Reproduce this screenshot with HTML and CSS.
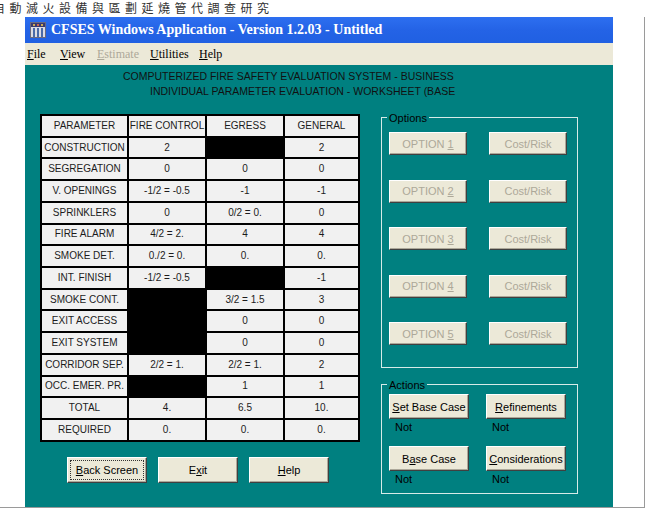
FILE: index.html
```html
<!DOCTYPE html>
<html>
<head>
<meta charset="utf-8">
<title>CFSES Windows Application</title>
<link rel="stylesheet" href="styles.css">
</head>
<body>
<div class="caption">自動滅火設備與區劃延燒管代調查研究</div>
<div class="screen">
  <div class="window">
    <div class="titlebar">
      <svg class="appicon" width="16" height="16" viewBox="0 0 16 16">
        <rect x="0.5" y="0.5" width="15" height="15" fill="#dcdce4" stroke="#6a6a80"/>
        <rect x="1" y="1" width="14" height="4" fill="#3a3a70"/>
        <circle cx="4" cy="3" r="1" fill="#ffd24a"/>
        <circle cx="8" cy="3" r="1" fill="#ff7a4a"/>
        <circle cx="12" cy="3" r="1" fill="#ffd24a"/>
        <rect x="3" y="6" width="2" height="9" fill="#4a6aa8"/>
        <rect x="7" y="6" width="2" height="9" fill="#4a6aa8"/>
        <rect x="11" y="6" width="2" height="9" fill="#4a6aa8"/>
      </svg>
      <span class="title">CFSES Windows Application - Version 1.2.03 - Untitled</span>
    </div>
    <div class="menubar">
      <span><u>F</u>ile</span>
      <span><u>V</u>iew</span>
      <span class="off"><u>E</u>stimate</span>
      <span><u>U</u>tilities</span>
      <span><u>H</u>elp</span>
    </div>
    <div class="client">
      <div class="heading h1">COMPUTERIZED FIRE SAFETY EVALUATION SYSTEM - BUSINESS</div>
      <div class="heading h2">INDIVIDUAL PARAMETER EVALUATION - WORKSHEET (BASE</div>
      <div class="main">
        <div class="left">
          <table class="grid">
            <colgroup><col class="c1"><col class="c2"><col class="c3"><col class="c4"></colgroup>
            <tr><td>PARAMETER</td><td>FIRE CONTROL</td><td>EGRESS</td><td>GENERAL</td></tr>
            <tr><td>CONSTRUCTION</td><td>2</td><td class="blk"></td><td>2</td></tr>
            <tr><td>SEGREGATION</td><td>0</td><td>0</td><td>0</td></tr>
            <tr><td>V. OPENINGS</td><td>-1/2 = -0.5</td><td>-1</td><td>-1</td></tr>
            <tr><td>SPRINKLERS</td><td>0</td><td>0/2 = 0.</td><td>0</td></tr>
            <tr><td>FIRE ALARM</td><td>4/2 = 2.</td><td>4</td><td>4</td></tr>
            <tr><td>SMOKE DET.</td><td>0./2 = 0.</td><td>0.</td><td>0.</td></tr>
            <tr><td>INT. FINISH</td><td>-1/2 = -0.5</td><td class="blk"></td><td>-1</td></tr>
            <tr><td>SMOKE CONT.</td><td class="blk"></td><td>3/2 = 1.5</td><td>3</td></tr>
            <tr><td>EXIT ACCESS</td><td class="blk"></td><td>0</td><td>0</td></tr>
            <tr><td>EXIT SYSTEM</td><td class="blk"></td><td>0</td><td>0</td></tr>
            <tr><td>CORRIDOR SEP.</td><td>2/2 = 1.</td><td>2/2 = 1.</td><td>2</td></tr>
            <tr><td>OCC. EMER. PR.</td><td class="blk"></td><td>1</td><td>1</td></tr>
            <tr><td>TOTAL</td><td>4.</td><td>6.5</td><td>10.</td></tr>
            <tr><td>REQUIRED</td><td>0.</td><td>0.</td><td>0.</td></tr>
          </table>
          <div class="navbtns">
            <div class="btn nav focus"><span><u>B</u>ack Screen</span></div>
            <div class="btn nav"><span>E<u>x</u>it</span></div>
            <div class="btn nav"><span><u>H</u>elp</span></div>
          </div>
        </div>
        <div class="right">
          <div class="group options">
            <span class="legend">Options</span>
            <div class="optgrid">
              <div class="btn opt off"><span>OPTION <u>1</u></span></div><div class="btn opt off"><span>Cost/Risk</span></div>
              <div class="btn opt off"><span>OPTION <u>2</u></span></div><div class="btn opt off"><span>Cost/Risk</span></div>
              <div class="btn opt off"><span>OPTION <u>3</u></span></div><div class="btn opt off"><span>Cost/Risk</span></div>
              <div class="btn opt off"><span>OPTION <u>4</u></span></div><div class="btn opt off"><span>Cost/Risk</span></div>
              <div class="btn opt off"><span>OPTION <u>5</u></span></div><div class="btn opt off"><span>Cost/Risk</span></div>
            </div>
          </div>
          <div class="group actions">
            <span class="legend">Actions</span>
            <div class="actgrid">
              <div class="act"><div class="btn abtn"><span><u>S</u>et Base Case</span></div><div class="not">Not</div></div>
              <div class="act"><div class="btn abtn"><span><u>R</u>efinements</span></div><div class="not">Not</div></div>
              <div class="act"><div class="btn abtn"><span>B<u>a</u>se Case</span></div><div class="not">Not</div></div>
              <div class="act"><div class="btn abtn"><span><u>C</u>onsiderations</span></div><div class="not">Not</div></div>
            </div>
          </div>
        </div>
      </div>
    </div>
  </div>
</div>
</body>
</html>
```

FILE: styles.css
```css
* { box-sizing: border-box; }
html, body { margin: 0; padding: 0; background: #fff; }
body {
  width: 651px;
  height: 516px;
  overflow: hidden;
  font-family: "Liberation Sans", Arial, sans-serif;
}
.caption {
  height: 17px;
  font-family: "Noto Sans CJK TC", "Noto Sans CJK SC", sans-serif;
  font-size: 12px;
  line-height: 15px;
  letter-spacing: 4.5px;
  text-indent: -7px;
  color: #333;
  white-space: nowrap;
  overflow: hidden;
}
.screen {
  width: 645px;
  border-right: 1px solid #9a9a9a;
  border-bottom: 1px solid #9a9a9a;
  padding-left: 25px;
}
.window { width: 588px; }
.titlebar {
  height: 26px;
  background: linear-gradient(#2d6ff0, #2463e6 50%, #2060e2);
  display: flex;
  align-items: center;
  padding-left: 5px;
  gap: 5px;
}
.appicon { flex: none; }
.title {
  color: #fff;
  font-family: "Liberation Serif", serif;
  font-weight: bold;
  font-size: 14px;
  white-space: nowrap;
}
.menubar {
  height: 22px;
  background: #ece9d8;
  display: grid;
  grid-template-columns: 33px 37px 53px 49px auto;
  padding-left: 2px;
  align-items: center;
  font-family: "Liberation Serif", serif;
  font-size: 12px;
  color: #000;
}
.menubar .off { color: #aca899; }
.client {
  height: 442px;
  background: #008080;
  padding-top: 4px;
}
.heading {
  font-size: 10.5px;
  line-height: 15px;
  color: #111;
  white-space: nowrap;
}
.h1 { margin-left: 98px; }
.h2 { margin-left: 125px; }
.main {
  display: flex;
  align-items: flex-start;
  margin-top: 15px;
}
.left { margin-left: 15px; }
.grid {
  border-collapse: separate;
  border-spacing: 2px;
  background: #000;
  table-layout: fixed;
  width: 320px;
}
.c1 { width: 85px; }
.c2 { width: 76px; }
.c3 { width: 76px; }
.c4 { width: 73px; }
.grid td {
  background: #f1f1f1;
  height: 19.73px;
  padding: 0;
  text-align: center;
  vertical-align: middle;
  font-size: 10px;
  line-height: 12px;
  color: #1c1c1c;
  white-space: nowrap;
  overflow: visible;
}
.grid td.blk { background: #000; }
.navbtns {
  display: flex;
  margin: 15px 0 0 27px;
  gap: 11px;
}
.btn {
  display: flex;
  align-items: center;
  justify-content: center;
  background: #ece9d8;
  border: 1px solid;
  border-color: #fff #404040 #404040 #fff;
  box-shadow: inset -1px -1px #aca899;
  font-size: 11px;
  color: #000;
  white-space: nowrap;
}
.btn.off { color: #aca899; }
.nav { width: 80px; height: 26px; }
.focus { position: relative; }
.focus::after {
  content: "";
  position: absolute;
  inset: 2px;
  border: 1px dotted #333;
}
.right { margin-left: 21px; margin-top: 3px; }
.group {
  width: 197px;
  border: 1px solid #d6ebe8;
  display: flex;
  flex-direction: column;
  align-items: flex-start;
}
.legend {
  margin: -7px 0 0 5px;
  padding: 0 2px;
  background: #008080;
  line-height: 14px;
  font-size: 11px;
  color: #000;
}
.optgrid {
  display: grid;
  grid-template-columns: 78px 78px;
  grid-auto-rows: 23px;
  column-gap: 22px;
  row-gap: 24.5px;
  margin: 7px 0 22px 7px;
}
.actions { margin-top: 16px; }
.actgrid {
  display: grid;
  grid-template-columns: 80px 80px;
  column-gap: 17px;
  row-gap: 12px;
  margin: 2px 0 7px 7px;
}
.abtn { height: 25px; }
.not {
  margin-top: 1px;
  padding-left: 6px;
  line-height: 14px;
  font-size: 11px;
  color: #000;
}
```
